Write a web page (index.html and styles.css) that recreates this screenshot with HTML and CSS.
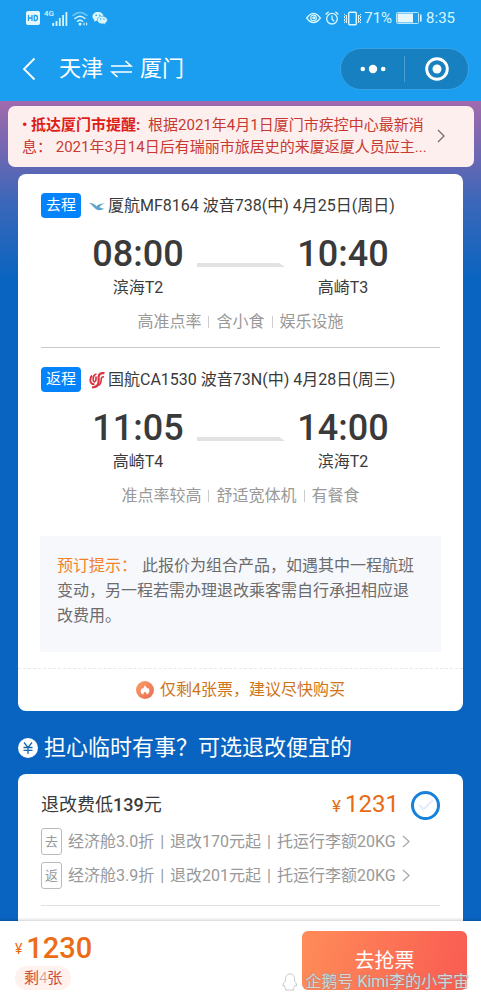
FILE: index.html
```html
<!DOCTYPE html>
<html lang="zh-CN">
<head>
<meta charset="utf-8">
<meta name="viewport" content="width=device-width, initial-scale=1">
<title>天津 ⇌ 厦门</title>
<link rel="stylesheet" href="styles.css">
</head>
<body>
<div class="page">
  <header class="header">
    <div class="status">
      <div class="status-group">
        <svg width="14" height="14" viewBox="0 0 14 14"><rect width="14" height="14" rx="2" fill="#e4f7fc"/><path d="M2.500 4v6M6 4v6M2.500 7H6M8.300 4.500v5h1.200q2 0 2-2.500t-2-2.500z" fill="none" stroke="#1c9ef0" stroke-width="1.300"/></svg>
        <span class="net">4G</span>
        <svg width="16" height="15" viewBox="0 0 16 15"><path d="M1.200 15v-3M4.500 15v-5M7.800 15V7M11.100 15V4M14.400 15V1" stroke="#d4f4fb" stroke-width="1.800" fill="none"/></svg>
        <svg width="16" height="15" viewBox="0 0 16 15"><g fill="none" stroke-linecap="round" stroke-width="1.500"><path d="M1 4.500q7-6 14 0" stroke="#72caf5"/><path d="M3 7.500q5-4.600 10 0M5.500 10.300q2.500-2.200 5 0" stroke="#d8f6fc"/></g><circle cx="8" cy="13" r="1.500" fill="#d8f6fc"/><path d="M11 13l1.500-2v4zM15.500 13L14 11v4z" fill="#d8f6fc"/></svg>
        <svg width="16" height="14" viewBox="0 0 16 14"><path d="M6 1C2.800 1 .5 3 .5 5.500c0 1.500.8 2.700 2 3.500L2 10.800 4.200 9.700 6 10c3 0 5.500-2 5.500-4.500S9 1 6 1z" fill="#d8f6fc"/><path d="M10.300 5.200c-2.800 0-5 1.700-5 3.900s2.200 3.900 5 3.900l1.600-.2 1.900.9-.5-1.500c1.300-.7 2.100-1.800 2.100-3.100 0-2.200-2.300-3.900-5.100-3.900z" fill="#d8f6fc" stroke="#1c9ef0" stroke-width=".6"/><g fill="#1c9ef0"><circle cx="4.200" cy="4.200" r=".8"/><circle cx="7.800" cy="4.200" r=".8"/><circle cx="8.700" cy="8" r=".7"/><circle cx="12" cy="8" r=".7"/></g></svg>
      </div>
      <div class="status-group status-right">
        <svg width="15" height="12" viewBox="0 0 15 12"><path d="M.7 6Q7.500-3.200 14.300 6 7.500 15.200.7 6z" fill="none" stroke="#d8f6fc" stroke-width="1.300"/><circle cx="7.500" cy="6" r="2.800" fill="none" stroke="#d8f6fc" stroke-width="1.200"/><circle cx="7.800" cy="5.800" r="1.500" fill="#d8f6fc"/></svg>
        <svg width="14" height="14" viewBox="0 0 14 14"><g fill="none" stroke="#d8f6fc" stroke-width="1.300"><circle cx="7" cy="7.700" r="5.300"/><path d="M7 4.500v3.500l2 2.200M.6 3.600L3.600.8M13.400 3.600L10.400.8"/></g></svg>
        <svg width="19" height="15" viewBox="0 0 19 15"><g fill="none" stroke="#d8f6fc"><rect x="5.700" y="1.200" width="7.600" height="12.600" rx="1" stroke-width="1.500"/><path d="M1 3l1.500 1.500L1 6l1.500 1.500L1 9l1.500 1.500L1 12M3.500 4v8M18 3l-1.500 1.500L18 6l-1.500 1.500L18 9l-1.500 1.500L18 12M15.500 4v8" stroke-width="1"/></g></svg>
        <span>71%</span>
        <svg class="battery" width="26" height="12" viewBox="0 0 26 12"><rect x=".5" y=".5" width="22" height="11" rx="1" fill="none" stroke="#b9e8fa"/><rect x="1.500" y="1.500" width="15.500" height="9" fill="#e4f7fc"/><path d="M24.800 2.500v7" stroke="#d8f6fc" stroke-width="1.600"/></svg>
        <span>8:35</span>
      </div>
    </div>
    <nav class="nav">
      <button class="back" type="button" aria-label="返回"><svg width="14" height="24" viewBox="0 0 14 24"><path d="M12.500 1.500L2 12l10.500 10.500" fill="none" stroke="#fff" stroke-width="1.800"/></svg></button>
      <h1 class="title"><span>天津</span><svg width="23" height="18" viewBox="0 0 23 18"><path d="M1 6h20L15.500 1M22 12H2l5.500 5" fill="none" stroke="#fff" stroke-width="1.600"/></svg><span>厦门</span></h1>
      <div class="capsule">
        <button type="button" aria-label="更多"><svg width="26" height="10" viewBox="0 0 26 10"><g fill="#fff"><circle cx="2.800" cy="5" r="2.300"/><circle cx="13" cy="5" r="4.200"/><circle cx="23.200" cy="5" r="2.300"/></g></svg></button>
        <button type="button" aria-label="关闭"><svg width="24" height="24" viewBox="0 0 24 24"><circle cx="12" cy="12" r="10.300" fill="none" stroke="#fff" stroke-width="2.900"/><circle cx="12" cy="12" r="4.500" fill="#fff"/></svg></button>
      </div>
    </nav>
  </header>

  <main class="content">
    <a class="notice" href="#notice">
      <span class="notice-text"><strong>• 抵达厦门市提醒:</strong> 根据2021年4月1日厦门市疾控中心最新消<br>息： 2021年3月14日后有瑞丽市旅居史的来厦返厦人员应主...</span>
      <svg width="8" height="14" viewBox="0 0 8 14"><path d="M1 1l6 6-6 6" fill="none" stroke="#776b6b" stroke-width="1.300"/></svg>
    </a>

    <section class="card">
      <article class="leg">
        <div class="leg-head">
          <span class="badge">去程</span>
          <svg width="16" height="16" viewBox="0 0 16 16"><path d="M0 5c3-.2 5.200.8 7.500 3.300C9.500 6.300 12 5.300 16 5.600c-3 .8-4.600 2-5.600 3.600 1.800.9 3.200 1.300 4.800 1.300-2.500 1.900-6 2.400-8.500.5C4.800 9.600 3.500 6.800 0 5z" fill="#5ea4ca"/></svg>
          <span>厦航MF8164 波音738(中) 4月25日(周日)</span>
        </div>
        <div class="times">
          <div class="stop"><time class="time">08:00</time><span>滨海T2</span></div>
          <svg class="arrow" width="88" height="6" viewBox="0 0 88 6"><path d="M0 1h82l6 4H0z" fill="#e2e2e2"/></svg>
          <div class="stop"><time class="time">10:40</time><span>高崎T3</span></div>
        </div>
        <div class="tags"><span>高准点率</span><span>含小食</span><span>娱乐设施</span></div>
      </article>
      <article class="leg">
        <div class="leg-head">
          <span class="badge">返程</span>
          <svg width="16" height="18" viewBox="0 0 16 18"><g fill="none" stroke="#dc3340"><path d="M15.500 2.200Q9.800 1.400 9.600 6v4.500q0 5.500-6.600 6" stroke-width="2.200"/><path d="M15 5.800q-2.800-.2-2.800 2.700 0 4.500-3 6" stroke-width="1.600"/><path d="M7.500 3Q4 4 4.200 8q0 3 1.500 2.800Q7 10.500 7 8V5.500" stroke-width="1.700"/><path d="M3 4.500Q.8 7 1.500 10.500q.7 3 4 2.700" stroke-width="1.900"/></g></svg>
          <span>国航CA1530 波音73N(中) 4月28日(周三)</span>
        </div>
        <div class="times">
          <div class="stop"><time class="time">11:05</time><span>高崎T4</span></div>
          <svg class="arrow" width="88" height="6" viewBox="0 0 88 6"><path d="M0 1h82l6 4H0z" fill="#e2e2e2"/></svg>
          <div class="stop"><time class="time">14:00</time><span>滨海T2</span></div>
        </div>
        <div class="tags"><span>准点率较高</span><span>舒适宽体机</span><span>有餐食</span></div>
      </article>
      <p class="hint"><span class="hint-label">预订提示：</span>此报价为组合产品，如遇其中一程航班变动，另一程若需办理退改乘客需自行承担相应退改费用。</p>
      <div class="stock">
        <svg width="18" height="18" viewBox="0 0 18 18"><defs><linearGradient id="flame" x1="0" y1="0" x2="1" y2="1"><stop offset="0" stop-color="#f9a069"/><stop offset="1" stop-color="#ee6a50"/></linearGradient></defs><circle cx="9" cy="9" r="9" fill="url(#flame)"/><path d="M8.800 4c.4 1.500 2.100 2.200 2.400 3.800l.9-1c1 1.300 1.500 2.400 1.200 3.700-.3 1.600-1.300 2.600-2.600 3-.1-1.400-.8-2-1.700-2.700-.9.700-1.600 1.300-1.700 2.700-1.500-.4-2.500-1.500-2.600-3.100-.1-1.500.8-2.400 1.400-3.300l.8.900C7.500 6.600 8.800 5.500 8.800 4z" fill="#fff"/></svg>
        <span>仅剩4张票，建议尽快购买</span>
      </div>
    </section>

    <h2 class="section-title">
      <svg width="20" height="20" viewBox="0 0 20 20"><circle cx="10" cy="10" r="10" fill="#fff"/><path d="M6 4.500l4 5 4-5M5.500 9.500h9M5.500 12.300h9M10 9.500V16" fill="none" stroke="#1767ae" stroke-width="1.300"/></svg>
      <span>担心临时有事？可选退改便宜的</span>
    </h2>

    <section class="card option">
      <div class="option-head">
        <label class="option-name" for="cheap">退改费低<b>139</b>元</label>
        <span class="option-price"><small>¥</small>1231</span>
        <span class="pick"><input id="cheap" type="radio" name="fare"><svg width="16" height="12" viewBox="0 0 16 12"><path d="M1 6l4.500 4.500L15 1" fill="none" stroke="#e6eefb" stroke-width="2.200"/></svg></span>
      </div>
      <a class="rule" href="#go"><span class="rule-tag">去</span><span>经济舱3.0折<span class="bar"> | </span>退改170元起<span class="bar"> | </span>托运行李额20KG</span><svg width="8" height="13" viewBox="0 0 8 13"><path d="M1 1l6 5.500L1 12" fill="none" stroke="#aaa" stroke-width="1.300"/></svg></a>
      <a class="rule" href="#back"><span class="rule-tag">返</span><span>经济舱3.9折<span class="bar"> | </span>退改201元起<span class="bar"> | </span>托运行李额20KG</span><svg width="8" height="13" viewBox="0 0 8 13"><path d="M1 1l6 5.500L1 12" fill="none" stroke="#aaa" stroke-width="1.300"/></svg></a>
      <hr class="divider">
    </section>
  </main>

  <footer class="footer">
    <div>
      <div class="total"><small>¥</small>1230</div>
      <span class="left">剩<i>4</i>张</span>
    </div>
    <button class="buy" type="button">去抢票</button>
    <div class="watermark"><svg width="18" height="18" viewBox="0 0 18 18"><path d="M4.500 8C4 3 6 1 9 1s5 2 4.500 7c1.800 2 2.500 4 2 5l-2-.5c0 1.500-.6 2.500-1.500 3l1 1.500H4l1-1.500c-1-.5-1.500-1.500-1.500-3L2 13c-.7-1 .8-3.500 2.500-5z" fill="#fff" stroke="#c4c4c4" stroke-width=".9"/></svg><span>企鹅号 Kimi李的小宇宙</span></div>
  </footer>
</div>
</body>
</html>
```
FILE: styles.css
```css
* { box-sizing: border-box; }
body {
  margin: 0;
  font-family: Roboto, "Noto Sans CJK SC", sans-serif;
  font-size: 16px;
  line-height: 24px;
  color: #3a3a3a;
}
svg { display: block; flex: none; }
button { padding: 0; border: 0; background: none; font: inherit; color: inherit; }
a { color: inherit; text-decoration: none; }

.page { display: flex; flex-direction: column; height: 100vh; overflow: hidden; background: #0864c0; }

.header { flex: none; background: #1c9ef0; color: #fff; }
.status { display: flex; justify-content: space-between; height: 36px; padding: 0 26px; color: #d8f6fc; }
.status-group { display: flex; align-items: center; gap: 4px; }
.status-right { font-size: 15px; }
.status-right svg + span { margin-left: -2px; }
.status-right .battery + span { margin-left: 0; }
.net { align-self: flex-start; padding-top: 9px; font-size: 8px; line-height: 10px; font-weight: 500; }
.status-group .net + svg { margin-left: -6px; }

.nav { display: flex; align-items: center; height: 65px; padding: 0 12px 0 22px; }
.back { width: 37px; }
.title { display: flex; align-items: center; gap: 7px; margin: 0; font-size: 22px; line-height: 32px; font-weight: 400; }
.capsule { display: flex; width: 129px; height: 42px; margin-left: auto; border: 1px solid #36a3e8; border-radius: 21px; background: #1780c1; }
.capsule button { display: flex; flex: 1; align-items: center; justify-content: center; margin: 7px 0; }
.capsule button + button { border-left: 1px solid #4a9fd4; }

.content { flex: 1; min-height: 0; padding-top: 5px; overflow: hidden; background: linear-gradient(#a16aad 0, #7167b2 50px, #3c67b9 100px, #0864c0 180px); }
.notice { display: flex; align-items: center; justify-content: space-between; margin: 0 7px 7px 8px; padding: 8px 29px 9px 14px; border-radius: 7px; background: #feefef; color: #c63a32; font-size: 15px; line-height: 22px; white-space: nowrap; }
.notice strong { margin-right: 4px; color: #dc1f18; font-weight: 700; }

.card { margin: 0 18px; padding: 0 23px; border-radius: 8px; background: #fff; }
.leg { padding: 19px 0 13px; }
.leg + .leg { border-top: 1px solid #c8c8c8; }
.leg-head { display: flex; align-items: center; gap: 8px; height: 25px; white-space: nowrap; }
.leg-head svg { margin-right: -5px; }
.badge { padding: 0 5px; border-radius: 4px; background: #0583fa; color: #fff; font-size: 15px; line-height: 25px; }
.times { display: flex; justify-content: center; padding-top: 15px; }
.stop { display: flex; flex: none; flex-direction: column; align-items: center; width: 117px; }
.time { font-size: 36px; line-height: 43px; font-weight: 500; }
.arrow { margin-top: 29px; }
.tags { display: flex; justify-content: center; padding-top: 10px; color: #999; }
.tags span { display: flex; align-items: center; }
.tags span + span::before { content: ""; width: 1px; height: 12px; margin: 0 7px; background: #ccc; }
.hint { margin: 15px -1px 16px; padding: 17px 24px 24px 17px; background: #f7f8fc; color: #6c6c6c; line-height: 25px; }
.hint-label { margin-right: 5px; color: #ef8328; }
.stock { display: flex; align-items: center; justify-content: center; gap: 6px; margin: 0 -23px; padding: 9px 0; border-top: 1px dashed #e8e8e8; color: #cf7518; }

.section-title { display: flex; align-items: center; gap: 6px; margin: 0; padding: 20px 18px 10px; color: #fff; font-size: 22px; line-height: 33px; font-weight: 400; }

.option { padding-top: 16px; padding-bottom: 40px; }
.option-head { display: flex; align-items: center; margin-bottom: 8px; }
.option-name { flex: 1; font-size: 18px; }
.option-name b { font-weight: 500; }
.option-price { color: #e96b14; font-size: 24px; line-height: 28px; }
.option-price small { margin-right: 4px; font-size: 17px; }
.pick { display: grid; place-items: center; margin-left: 12px; }
.pick input, .pick svg { grid-area: 1 / 1; }
.pick svg { z-index: 1; pointer-events: none; }
.pick input { width: 29px; height: 29px; margin: 0; border: 3px solid #1781db; border-radius: 50%; appearance: none; background: #fff; }
.rule { display: flex; align-items: center; gap: 6px; margin-bottom: 7px; color: #999; white-space: nowrap; }
.rule-tag { width: 21px; border: 1px solid #bbb; border-radius: 3px; font-size: 13px; line-height: 25px; text-align: center; }
.bar { margin: 0 2px; }
.divider { margin: 16px 0 0; border: 0; border-top: 1px solid #e0e0e0; }

.footer { position: relative; display: flex; flex: none; justify-content: space-between; padding: 10px 14px 10px 15px; background: #fff; box-shadow: 0 -1px 3px #0003; }
.total { color: #ec6c15; font-size: 29px; line-height: 34px; font-weight: 500; }
.total small { margin-right: 4px; font-size: 14px; font-weight: 400; vertical-align: 4px; }
.left { display: inline-block; padding: 0 9px; border-radius: 12px; background: #fff1ed; color: #cf4a38; font-size: 15px; line-height: 24px; }
.left i { color: #c59990; font-style: normal; font-weight: 300; }
.buy { width: 165px; height: 59px; border-radius: 6px; background: linear-gradient(100deg, #ff8c58, #f95c52); color: #fff; font-size: 20px; }
.watermark { position: absolute; right: 12px; bottom: 6px; display: flex; gap: 6px; color: #ffffffb3; text-shadow: 0 0 1px #777, 0 0 1px #999; pointer-events: none; white-space: nowrap; }
.watermark svg { margin-top: 3px; }
```
